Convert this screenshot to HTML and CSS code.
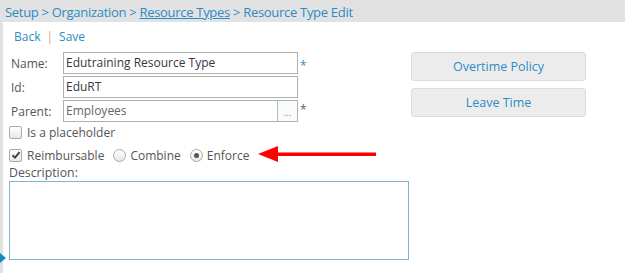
FILE: index.html
```html
<!DOCTYPE html>
<html>
<head>
<meta charset="utf-8">
<link rel="stylesheet" href="styles.css">
</head>
<body>
<div class="crumbs">Setup &gt; Organization &gt; <a class="crumb-link">Resource Types</a> &gt; Resource Type Edit</div>
<div class="below">
<div class="strip"><svg class="marker" width="6" height="10" viewBox="0 0 6 10"><path d="M0 0 L6 5 L0 10 Z" fill="#1a8ac6"/></svg></div>
<div class="page">
  <div class="actions"><a>Back</a><span class="sep">|</span><a>Save</a></div>
  <div class="main">
    <div class="form">
      <div class="row">
        <label class="lbl">Name:</label>
        <div class="input">Edutraining Resource Type</div>
        <span class="req blue">*</span>
      </div>
      <div class="row">
        <label class="lbl">Id:</label>
        <div class="input">EduRT</div>
      </div>
      <div class="row">
        <label class="lbl">Parent:</label>
        <div class="input parent"><span class="ptext">Employees</span><span class="dots">...</span></div>
        <span class="req">*</span>
      </div>
      <div class="check-row">
        <span class="cb"></span><span class="ctext">Is a placeholder</span>
      </div>
      <div class="check-row two">
        <span class="cb checked"><svg width="10" height="10" viewBox="0 0 10 10"><path d="M1.5 5.2 L4 7.6 L8.6 2.2" fill="none" stroke="#444" stroke-width="2"/></svg></span><span class="ctext">Reimbursable</span>
        <span class="radio"></span><span class="ctext">Combine</span>
        <span class="radio on"><span class="dot"></span></span><span class="ctext">Enforce</span>
        <svg class="arrow" width="118" height="18" viewBox="0 0 118 18"><path d="M0 9 L20 1 L20 17 Z" fill="#ff0000"/><rect x="18" y="7.5" width="100" height="3.5" fill="#ff0000"/></svg>
      </div>
      <div class="desc-label">Description:</div>
      <div class="textarea"></div>
    </div>
    <div class="side">
      <div class="btn">Overtime Policy</div>
      <div class="btn">Leave Time</div>
    </div>
  </div>
</div>
</div>
</body>
</html>
```
FILE: styles.css
```css
html, body { margin: 0; padding: 0; }
html { overflow: hidden; }
body {
  width: 625px; height: 273px;
  font-family: "Open Sans", "DejaVu Sans", sans-serif;
  font-size: 12px; color: #555;
  background: #fff;
  display: flex; flex-direction: column;
}
.crumbs {
  height: 22px; background: #e2e2e2; flex: none;
  padding-left: 5px; box-sizing: border-box;
  color: #2b8cc4; font-size: 13px; line-height: 24px; letter-spacing: -0.3px;
}
.crumb-link { text-decoration: underline; }
.below { display: flex; flex: 1; }
.strip {
  width: 3px; flex: none; background: #e2e2e2;
  display: flex; flex-direction: column; padding-top: 231px; box-sizing: border-box;
}
.marker { display: block; flex: none; position: relative; z-index: 2; }
.page { padding: 6px 0 0 6px; flex: 1; }
.actions { color: #2b8cc4; font-size: 12px; line-height: 17px; padding-left: 5px; }
.actions .sep { color: #e0a080; margin: 0 6px; }
.main { display: flex; margin-top: 7px; }
.form { width: 402px; }
.row { display: flex; align-items: center; height: 22px; margin-bottom: 2px; }
.lbl { width: 52px; padding-left: 2px; color: #555; }
.input {
  width: 231px; height: 20px; border: 1px solid #b0b0b0;
  color: #3a3444; line-height: 20px; padding-left: 2px;
  font-size: 12px; box-sizing: content-box;
}
.input.parent { display: flex; color: #666; padding-left: 2px; }
.ptext { flex: 1; }
.dots {
  width: 19px; border-left: 1px solid #9cc3da; text-align: center;
  font-size: 9px; line-height: 24px; color: #888; background: #fafafa;
}
.row .req { margin-left: 2px; color: #666; font-size: 12px; align-self: flex-start; line-height: 20px; }
.row .req.blue { color: #2b8cc4; line-height: 28px; }
.check-row { display: flex; align-items: center; height: 18px; position: relative; margin-top: -1px; }
.check-row.two { height: 22px; margin-top: 3px; }
.cb {
  width: 11px; height: 11px; border: 1px solid #aaa; border-radius: 2px;
  background: linear-gradient(#fff, #e8e8e8); margin-right: 5px; display: flex;
  align-items: center; justify-content: center;
}
.ctext { font-size: 12px; }
.radio {
  width: 11px; height: 11px; border: 1px solid #aaa; border-radius: 50%;
  background: linear-gradient(#fff, #e6e6e6); margin: 0 4px 0 9px;
  display: flex; align-items: center; justify-content: center;
}
.radio .dot { width: 5px; height: 5px; border-radius: 50%; background: #555; }
.arrow { position: absolute; left: 249px; top: 1px; }
.desc-label { line-height: 14px; font-size: 12.3px; }
.textarea { width: 398px; height: 77px; border: 1px solid #7fb5d3; margin-top: 1px; }
.side { display: flex; flex-direction: column; gap: 7px; }
.btn {
  width: 173px; height: 27px; border: 1px solid #dcdcdc; border-radius: 3px;
  background: #ececec; color: #2b8cc4; text-align: center; line-height: 28px;
  font-size: 12.5px;
}
```
